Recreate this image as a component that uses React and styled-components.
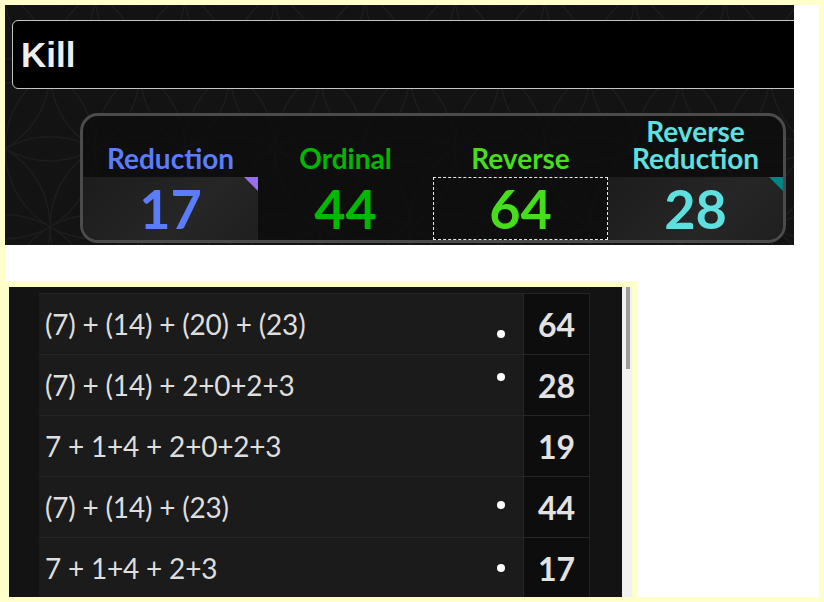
import * as React from 'react';
import styled, { createGlobalStyle, css } from 'styled-components';

const GlobalStyle = createGlobalStyle`
  html, body {
    margin: 0;
    padding: 0;
    background: #ffffcc;
  }
  * {
    box-sizing: border-box;
  }
`;

const Page = styled.div`
  padding: 5px;
  width: 824px;
  height: 602px;
`;

const Card = styled.div`
  width: 814px;
  height: 592px;
  background: #ffffff;
  display: flex;
  flex-direction: column;
  align-items: flex-start;
`;

const TopShot = styled.section`
  position: relative;
  width: 789px;
  height: 240px;
  background: #131313;
  overflow: hidden;
  padding: 15px 0 0 7px;
`;

const Pattern = styled.svg`
  position: absolute;
  inset: 0;
  pointer-events: none;
`;

const Layer = styled.div`
  position: relative;
  display: flex;
  flex-direction: column;
`;

const SearchBox = styled.div`
  width: 800px;
  height: 69px;
  background: #000;
  border: 1.5px solid #c4c4c4;
  border-radius: 6px;
  display: flex;
  align-items: center;
  padding-left: 8px;
  color: #eeeeee;
  font-family: "Liberation Sans", Arial, sans-serif;
  font-weight: bold;
  font-size: 35px;
`;

const StatsBox = styled.div`
  margin: 24px 0 0 68px;
  width: 706px;
  height: 130px;
  border: 3px solid #4b4b4b;
  border-radius: 18px;
  background: rgba(14, 14, 14, 0.85);
  display: grid;
  grid-template-columns: repeat(4, 175px);
  overflow: hidden;
`;

const Column = styled.div`
  display: flex;
  flex-direction: column;
  justify-content: flex-end;
  align-items: stretch;
  color: ${p => p.$color};
  font-family: Lato, "Open Sans", sans-serif;
  font-weight: bold;
  text-align: center;
`;

const Label = styled.div`
  font-size: 28px;
  line-height: 27px;
  padding-bottom: 5px;
`;

const Value = styled.div`
  position: relative;
  height: 63px;
  font-size: 54px;
  line-height: 63px;
  ${p => p.$shaded && css`
    background: linear-gradient(135deg, #1c1c1c, #262626 60%, #1f1f1f);
  `}
  ${p => p.$focused && css`
    outline: 1.5px dashed #e8e8e8;
    outline-offset: -1px;
  `}
  ${p => p.$corner && css`
    &::after {
      content: '';
      position: absolute;
      top: 0;
      right: 0;
      border-top: 14px solid ${p.$corner};
      border-left: 14px solid transparent;
    }
  `}
`;

const BottomFrame = styled.div`
  margin-top: 36px;
  width: 632px;
  height: 316px;
  background: #ffffcc;
  padding: 6px 5px 0 4px;
  display: flex;
`;

const BottomShot = styled.section`
  flex: 1;
  height: 310px;
  background: #131313;
  display: flex;
  overflow: hidden;
`;

const ListArea = styled.div`
  flex: 1;
  padding: 6px 32px 0 30px;
  display: flex;
  flex-direction: column;
`;

const Row = styled.div`
  display: grid;
  grid-template-columns: 1fr 67px;
  height: 61px;
  flex-shrink: 0;
  border-top: 1px solid #252525;
`;

const Formula = styled.div`
  display: flex;
  align-items: center;
  padding-left: 6px;
  background: #1b1b1b;
  color: #dedede;
  font-family: Lato, "Open Sans", sans-serif;
  font-size: 28px;
  letter-spacing: -0.2px;
`;

const Spacer = styled.div`
  flex: 1;
`;

const Dot = styled.span`
  width: 8px;
  height: 8px;
  border-radius: 50%;
  background: #ffffff;
  margin-right: 18px;
  transform: translateY(${p => p.$shift}px);
`;

const Total = styled.div`
  display: flex;
  align-items: center;
  justify-content: center;
  background: #0d0d0d;
  border-left: 1px solid #262626;
  border-right: 1px solid #222;
  color: #e2e2e2;
  font-family: Lato, "Open Sans", sans-serif;
  font-weight: bold;
  font-size: 32px;
`;

const Scrollbar = styled.div`
  width: 10px;
  height: 310px;
  background: #f1f1f1;
  padding: 0 2px 0 4px;
`;

const Thumb = styled.div`
  height: 82px;
  background: #9c9c9c;
`;

const ciphers = [
  { label: 'Reduction', value: 17, color: '#5b7cfb', shaded: true, corner: '#9a6cf0' },
  { label: 'Ordinal', value: 44, color: '#00b800' },
  { label: 'Reverse', value: 64, color: '#46dd1c', focused: true },
  { label: ['Reverse', 'Reduction'], value: 28, color: '#5ee0e0', shaded: true, corner: '#008585' },
];

const rows = [
  { text: '(7) + (14) + (20) + (23)', total: 64, dot: 10 },
  { text: '(7) + (14) + 2+0+2+3', total: 28, dot: -8 },
  { text: '7 + 1+4 + 2+0+2+3', total: 19 },
  { text: '(7) + (14) + (23)', total: 44, dot: -2 },
  { text: '7 + 1+4 + 2+3', total: 17, dot: 0 },
];

function Flower({ width, height }) {
  const r = 90;
  const circles = [];
  for (let y = -r; y < height + r; y += r * 0.866) {
    const row = Math.round(y / (r * 0.866));
    for (let x = -r; x < width + r; x += r) {
      circles.push([x + (row % 2 ? r / 2 : 0), y]);
    }
  }
  return (
    <Pattern width={width} height={height}>
      {circles.map(([cx, cy], i) => (
        <circle key={i} cx={cx} cy={cy} r={r} fill="none" stroke="#1d1d1d" strokeWidth="1.5" />
      ))}
    </Pattern>
  );
}

export default function App() {
  return (
    <Page>
      <GlobalStyle />
      <Card>
        <TopShot>
          <Flower width={789} height={240} />
          <Layer>
            <SearchBox>Kill</SearchBox>
            <StatsBox>
              {ciphers.map((c, i) => (
                <Column key={i} $color={c.color}>
                  <Label>
                    {Array.isArray(c.label)
                      ? c.label.map(l => <div key={l}>{l}</div>)
                      : c.label}
                  </Label>
                  <Value $shaded={c.shaded} $corner={c.corner} $focused={c.focused}>
                    {c.value}
                  </Value>
                </Column>
              ))}
            </StatsBox>
          </Layer>
        </TopShot>

        <BottomFrame>
          <BottomShot>
            <ListArea>
              {rows.map((r, i) => (
                <Row key={i}>
                  <Formula>
                    {r.text}
                    <Spacer />
                    {r.dot !== undefined && <Dot $shift={r.dot} />}
                  </Formula>
                  <Total>{r.total}</Total>
                </Row>
              ))}
            </ListArea>
          </BottomShot>
          <Scrollbar>
            <Thumb />
          </Scrollbar>
        </BottomFrame>
      </Card>
    </Page>
  );
}
